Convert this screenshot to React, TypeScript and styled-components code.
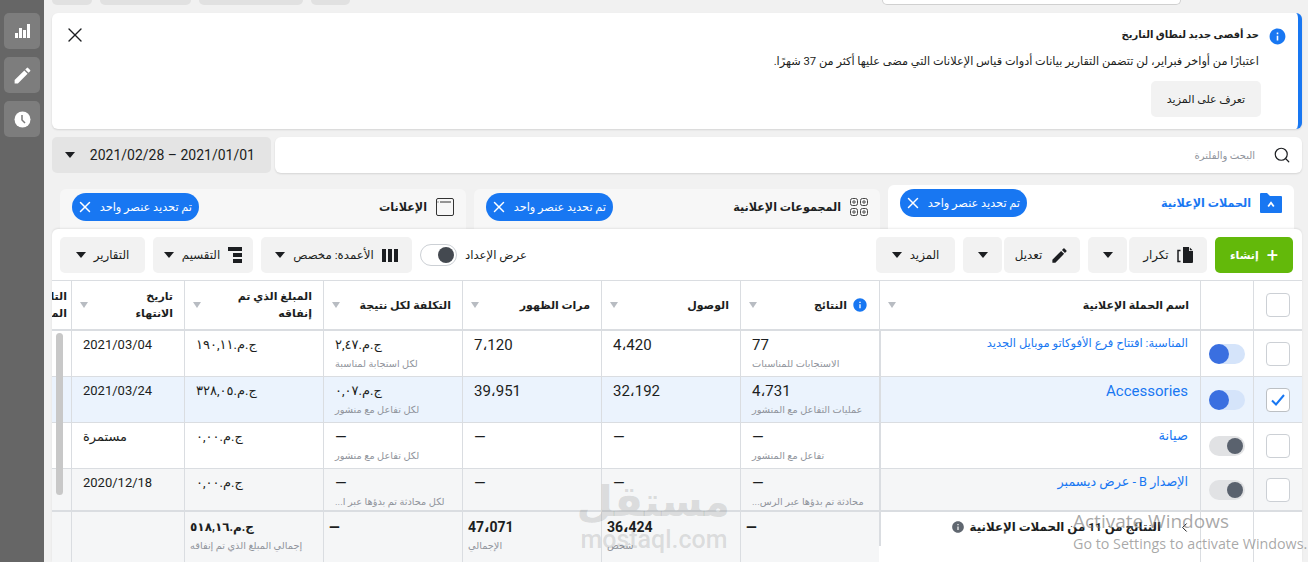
import { ReactNode } from 'react';
import styled, { createGlobalStyle } from 'styled-components';
import { X, Search, ChevronLeft } from 'lucide-react';
import { MdEdit, MdInfo } from 'react-icons/md';

const columns = '49px 53px 321px 139px 139px 139px 139px 139px 113px 19px';

const rows = [
  {
    bg: '#ffffff',
    on: true,
    checked: false,
    name: 'المناسبة: افتتاح فرع الأفوكاتو موبايل الجديد',
    nameSize: 11.5,
    results: '77',
    resultsSub: 'الاستجابات للمناسبات',
    reach: '4،420',
    impressions: '7،120',
    cost: 'ج.م.‏٢,٤٧',
    costSub: 'لكل استجابة لمناسبة',
    spend: 'ج.م.‏١٩٠,١١',
    end: '2021/03/04',
  },
  {
    bg: '#ebf3fd',
    on: true,
    checked: true,
    name: 'Accessories',
    nameSize: 15,
    results: '4،731',
    resultsSub: 'عمليات التفاعل مع المنشور',
    reach: '32،192',
    impressions: '39،951',
    cost: 'ج.م.‏٠,٠٧',
    costSub: 'لكل تفاعل مع منشور',
    spend: 'ج.م.‏٣٢٨,٠٥',
    end: '2021/03/24',
  },
  {
    bg: '#ffffff',
    on: false,
    checked: false,
    name: 'صيانة',
    nameSize: 13,
    results: '—',
    resultsSub: 'تفاعل مع المنشور',
    reach: '—',
    impressions: '—',
    cost: '—',
    costSub: 'لكل تفاعل مع منشور',
    spend: 'ج.م.‏٠,٠٠',
    end: 'مستمرة',
  },
  {
    bg: '#f5f6f7',
    on: false,
    checked: false,
    name: 'الإصدار B - عرض ديسمبر',
    nameSize: 12.7,
    results: '—',
    resultsSub: 'محادثة تم بدؤها عبر الرس...',
    reach: '—',
    impressions: '—',
    cost: '—',
    costSub: 'لكل محادثة تم بدؤها عبر ا...',
    spend: 'ج.م.‏٠,٠٠',
    end: '2020/12/18',
  },
];

function CampaignIcon() {
  return (
    <svg width="22" height="20" viewBox="0 0 22 20">
      <path d="M0 1a1 1 0 0 1 1-1h6l3 3h11a1 1 0 0 1 1 1v15a1 1 0 0 1-1 1H1a1 1 0 0 1-1-1z" fill="#1877f2" />
      <path d="M8.2 13.5L11 9.8l2.8 3.7" fill="none" stroke="#fff" strokeWidth="1.8" />
    </svg>
  );
}

function AdSetIcon() {
  return (
    <svg width="18" height="18" viewBox="0 0 18 18" fill="none" stroke="#444" strokeWidth="1">
      <rect x="0.5" y="0.5" width="7" height="7" rx="2" />
      <rect x="10.5" y="0.5" width="7" height="7" rx="2" />
      <rect x="0.5" y="10.5" width="7" height="7" rx="2" />
      <rect x="10.5" y="10.5" width="7" height="7" rx="2" />
      <circle cx="4" cy="4" r="1.2" />
      <circle cx="14" cy="4" r="1.2" />
      <circle cx="4" cy="14" r="1.2" />
      <circle cx="14" cy="14" r="1.2" />
    </svg>
  );
}

function AdIcon() {
  return (
    <svg width="18" height="18" viewBox="0 0 18 18" fill="none" stroke="#333" strokeWidth="1">
      <rect x="0.5" y="0.5" width="17" height="17" rx="1.5" />
      <path d="M4 4h11M1.5 4h1" />
    </svg>
  );
}

function BarsIcon() {
  return (
    <svg width="15" height="14" viewBox="0 0 15 14" fill="#fff">
      <rect x="0" y="9" width="3" height="5" />
      <rect x="4" y="4" width="3" height="10" />
      <rect x="8" y="6" width="3" height="8" />
      <rect x="12" y="0" width="3" height="14" />
    </svg>
  );
}

function ClockIcon() {
  return (
    <svg width="17" height="17" viewBox="0 0 17 17">
      <circle cx="8.5" cy="8.5" r="8" fill="#fff" />
      <path d="M8 4v5l3 3" fill="none" stroke="#7b7b7b" strokeWidth="1.5" />
    </svg>
  );
}

function DuplicateIcon() {
  return (
    <svg width="16" height="16" viewBox="0 0 16 16">
      <path d="M6 0h6v4h4v11a1 1 0 0 1-1 1H6z" fill="#1c1e21" />
      <path d="M12.8 0.5L15.6 3.2h-2.8z" fill="#1c1e21" />
      <path d="M3.5 3.5H1v11h2.5" fill="none" stroke="#1c1e21" strokeWidth="1.5" />
    </svg>
  );
}

function BreakdownIcon() {
  return (
    <svg width="14" height="16" viewBox="0 0 14 16" fill="#1c1e21">
      <rect x="0" y="0" width="14" height="4" />
      <rect x="5" y="6" width="9" height="4" />
      <rect x="5" y="12" width="9" height="4" />
    </svg>
  );
}

function ColumnsIcon() {
  return (
    <svg width="16" height="13" viewBox="0 0 16 13" fill="#1c1e21">
      <rect x="0" y="0" width="4" height="13" />
      <rect x="6" y="0" width="4" height="13" />
      <rect x="12" y="0" width="4" height="13" />
    </svg>
  );
}

function Tab({ active, title, icon }: { active?: boolean; title: string; icon: ReactNode }) {
  return (
    <TabBox $active={active}>
      <TabTitle $active={active}>
        {icon}
        <span>{title}</span>
      </TabTitle>
      <Pill>
        <span>تم تحديد عنصر واحد</span>
        <X size={18} strokeWidth={2} />
      </Pill>
    </TabBox>
  );
}

function HeadCell({ children, info }: { children?: ReactNode; info?: boolean }) {
  return (
    <Head>
      {info && <MdInfo size={16} color="#1877f2" />}
      <HeadText>{children}</HeadText>
      <SortCaret />
    </Head>
  );
}

export default function App() {
  return (
    <Page>
      <GlobalStyle />
      <Sidebar>
        <SideButton>
          <BarsIcon />
        </SideButton>
        <SideButton>
          <MdEdit size={21} color="#fff" />
        </SideButton>
        <SideButton>
          <ClockIcon />
        </SideButton>
      </Sidebar>

      <Main>
        <TopStrip>
          <TopStub $w={40} />
          <TopStub $w={91} />
          <TopStub $w={104} />
          <TopStub $w={39} />
          <TopInput />
        </TopStrip>

        <Notice>
          <NoticeBody>
            <NoticeIcon>
              <MdInfo size={19} color="#1877f2" />
            </NoticeIcon>
            <NoticeText>
              <NoticeTitle>حد أقصى جديد لنطاق التاريخ</NoticeTitle>
              <NoticeLine>
                اعتبارًا من أواخر فبراير، لن تتضمن التقارير بيانات أدوات قياس الإعلانات التي مضى عليها أكثر من 37 شهرًا.
              </NoticeLine>
              <NoticeButton $w={110}>تعرف على المزيد</NoticeButton>
            </NoticeText>
          </NoticeBody>
          <CloseBox>
            <X size={24} strokeWidth={1.4} color="#1c1e21" />
          </CloseBox>
        </Notice>

        <FilterRow>
          <SearchBox>
            <Search size={18} strokeWidth={1.6} color="#1c1e21" />
            <SearchHint>البحث والفلترة</SearchHint>
          </SearchBox>
          <DateButton>
            <DateText>2021/02/28 – 2021/01/01</DateText>
            <Caret />
          </DateButton>
        </FilterRow>

        <Tabs>
          <Tab active title="الحملات الإعلانية" icon={<CampaignIcon />} />
          <Tab title="المجموعات الإعلانية" icon={<AdSetIcon />} />
          <Tab title="الإعلانات" icon={<AdIcon />} />
        </Tabs>

        <Panel>
          <Toolbar>
            <ToolGroup>
              <CreateButton>
                <PlusMark>+</PlusMark>
                إنشاء
              </CreateButton>
              <Split>
                <GrayButton $w={78}>
                  <DuplicateIcon />
                  تكرار
                </GrayButton>
                <GrayButton $w={39}>
                  <Caret />
                </GrayButton>
              </Split>
              <Split>
                <GrayButton $w={76}>
                  <MdEdit size={19} color="#1c1e21" />
                  تعديل
                </GrayButton>
                <GrayButton $w={39}>
                  <Caret />
                </GrayButton>
              </Split>
              <GrayButton $w={79}>
                المزيد
                <Caret />
              </GrayButton>
            </ToolGroup>
            <ToolGroup>
              <SetupLabel>عرض الإعداد</SetupLabel>
              <SetupSwitch>
                <SetupKnob />
              </SetupSwitch>
              <GrayButton $w={151}>
                <ColumnsIcon />
                الأعمدة: مخصص
                <Caret />
              </GrayButton>
              <GrayButton $w={100}>
                <BreakdownIcon />
                التقسيم
                <Caret />
              </GrayButton>
              <GrayButton $w={85}>
                التقارير
                <Caret />
              </GrayButton>
            </ToolGroup>
          </Toolbar>

          <TableWrap>
            <HeaderRow>
              <Head>
                <Checkbox />
              </Head>
              <Head />
              <HeadCell>اسم الحملة الإعلانية</HeadCell>
              <HeadCell info>النتائج</HeadCell>
              <HeadCell>الوصول</HeadCell>
              <HeadCell>مرات الظهور</HeadCell>
              <HeadCell>التكلفة لكل نتيجة</HeadCell>
              <HeadCell>المبلغ الذي تم إنفاقه</HeadCell>
              <HeadCell>
                تاريخ
                <br />
                الانتهاء
              </HeadCell>
              <Head>
                <CutHead>التاريخ المحدد</CutHead>
              </Head>
            </HeaderRow>

            {rows.map((row, i) => (
              <Row key={row.name} $bg={row.bg} $last={i === rows.length - 1}>
                <Cell>
                  <Checkbox $checked={row.checked}>
                    {row.checked && (
                      <svg width="14" height="12" viewBox="0 0 14 12" fill="none" stroke="#1877f2" strokeWidth="2">
                        <path d="M1 6.5l4 4 8-9.5" />
                      </svg>
                    )}
                  </Checkbox>
                </Cell>
                <Cell>
                  <Toggle $on={row.on}>
                    <Knob $on={row.on} />
                  </Toggle>
                </Cell>
                <NameCell $size={row.nameSize}>{row.name}</NameCell>
                <ValueCell>
                  <Value>{row.results}</Value>
                  <Sub>{row.resultsSub}</Sub>
                </ValueCell>
                <ValueCell>
                  <Value>{row.reach}</Value>
                </ValueCell>
                <ValueCell>
                  <Value>{row.impressions}</Value>
                </ValueCell>
                <ValueCell>
                  {row.cost === '—' ? <Value>{row.cost}</Value> : <Money>{row.cost}</Money>}
                  <Sub>{row.costSub}</Sub>
                </ValueCell>
                <ValueCell>
                  <Money>{row.spend}</Money>
                </ValueCell>
                <ValueCell>
                  <Money>{row.end}</Money>
                </ValueCell>
                <Cell />
              </Row>
            ))}

            <FooterRow>
              <FootCell $white />
              <FootCell $white />
              <FootName>
                <ChevronLeft size={15} strokeWidth={1.6} color="#1c1e21" />
                <FootNameText>النتائج من 11 من الحملات الإعلانية</FootNameText>
                <MdInfo size={14} color="#606770" />
              </FootName>
              <FootCell>
                <FootValue>—</FootValue>
              </FootCell>
              <FootCell>
                <FootValue>36،424</FootValue>
                <Sub>شخص</Sub>
              </FootCell>
              <FootCell>
                <FootValue>47،071</FootValue>
                <Sub>الإجمالي</Sub>
              </FootCell>
              <FootCell>
                <FootValue>—</FootValue>
              </FootCell>
              <FootCell>
                <FootMoney>ج.م.‏٥١٨,١٦</FootMoney>
                <Sub>إجمالي المبلغ الذي تم إنفاقه</Sub>
              </FootCell>
              <FootCell />
              <FootCell />
            </FooterRow>

            <ScrollThumb />
          </TableWrap>
        </Panel>
      </Main>

      <Watermark>
        <WatermarkLogo>مستقل</WatermarkLogo>
        <WatermarkUrl>mostaql.com</WatermarkUrl>
      </Watermark>
      <Activation>
        <ActivationTitle>Activate Windows</ActivationTitle>
        <ActivationHint>Go to Settings to activate Windows.</ActivationHint>
      </Activation>
    </Page>
  );
}

const GlobalStyle = createGlobalStyle`
  html, body {
    margin: 0;
    padding: 0;
    height: 100%;
    background: #f1f1f1;
  }
  body {
    font-family: Roboto, "DejaVu Sans", sans-serif;
    color: #1c1e21;
  }
  * {
    box-sizing: border-box;
  }
`;

const Page = styled.div`
  position: relative;
  display: flex;
  width: 1308px;
  height: 562px;
  overflow: hidden;
`;

const Sidebar = styled.aside`
  flex: 0 0 44px;
  display: flex;
  flex-direction: column;
  gap: 8px;
  padding: 13px 4px 0;
  background: #666666;
`;

const SideButton = styled.div`
  display: flex;
  align-items: center;
  justify-content: center;
  height: 36px;
  border-radius: 5px;
  background: #7d7d7d;
`;

const Main = styled.main`
  width: 1250px;
  margin-left: 8px;
  display: flex;
  flex-direction: column;
`;

const TopStrip = styled.div`
  display: flex;
  gap: 8px;
  height: 13px;
`;

const TopStub = styled.div<{ $w: number }>`
  width: ${(p) => p.$w}px;
  height: 5px;
  border-radius: 0 0 5px 5px;
  background: #e1e1e1;
`;

const TopInput = styled.div`
  width: 299px;
  height: 5px;
  margin-left: 524px;
  border: 1px solid #d0d0d0;
  border-top: 0;
  border-radius: 0 0 5px 5px;
  background: #fff;
`;

const Notice = styled.section`
  direction: rtl;
  display: flex;
  justify-content: space-between;
  height: 116px;
  padding: 14px 0 0 11px;
  border-right: 4px solid #1877f2;
  border-radius: 6px;
  background: #fff;
  box-shadow: 0 1px 2px rgba(0, 0, 0, 0.12);
`;

const NoticeBody = styled.div`
  display: flex;
  gap: 9px;
  padding-right: 11px;
`;

const NoticeIcon = styled.div`
  width: 19px;
  line-height: 0;
`;

const NoticeText = styled.div`
  display: flex;
  flex-direction: column;
  align-items: flex-start;
`;

const NoticeTitle = styled.div`
  height: 20px;
  line-height: 16px;
  font-size: 10px;
  font-weight: 700;
`;

const NoticeLine = styled.div`
  margin-top: 6px;
  height: 28px;
  line-height: 18px;
  font-size: 11.3px;
`;

const CloseBox = styled.div`
  margin-top: -4px;
  line-height: 0;
`;

const FilterRow = styled.div`
  direction: rtl;
  display: flex;
  gap: 4px;
  margin-top: 8px;
  height: 36px;
`;

const SearchBox = styled.div`
  flex: 1;
  display: flex;
  align-items: center;
  gap: 18px;
  padding-right: 11px;
  border-radius: 6px;
  background: #fff;
  box-shadow: 0 1px 2px rgba(0, 0, 0, 0.12);
`;

const SearchHint = styled.span`
  font-size: 10px;
  color: #90949c;
`;

const Caret = styled.i`
  flex: none;
  width: 0;
  height: 0;
  border-left: 5.5px solid transparent;
  border-right: 5.5px solid transparent;
  border-top: 6px solid #1c1e21;
`;

const DateButton = styled.div`
  flex: 0 0 219px;
  direction: rtl;
  display: flex;
  align-items: center;
  justify-content: space-between;
  padding: 0 16px 0 13px;
  border-radius: 5px;
  background: #e4e4e4;
  font-size: 14px;
`;

const DateText = styled.span`
  direction: ltr;
`;

const Tabs = styled.div`
  direction: rtl;
  display: flex;
  align-items: flex-end;
  gap: 8px;
  height: 56px;
  padding: 0 8px;
`;

const TabBox = styled.div<{ $active?: boolean }>`
  flex: 1;
  display: flex;
  align-items: center;
  justify-content: space-between;
  height: ${(p) => (p.$active ? 44 : 40)}px;
  padding: ${(p) => (p.$active ? '0 12px 8px 12px' : '0 12px 4px 12px')};
  border-radius: 6px 6px 0 0;
  background: ${(p) => (p.$active ? '#fff' : '#f7f7f7')};
`;

const TabTitle = styled.div<{ $active?: boolean }>`
  display: flex;
  align-items: center;
  gap: 9px;
  font-size: 11.2px;
  font-weight: 700;
  color: ${(p) => (p.$active ? '#1877f2' : '#1c1e21')};
`;

const Pill = styled.div`
  display: flex;
  align-items: center;
  justify-content: space-between;
  width: 127px;
  height: 28px;
  padding: 0 7px 0 4px;
  border-radius: 14px;
  background: #1877f2;
  color: #fff;
  font-size: 11.3px;
  white-space: nowrap;
`;

const Panel = styled.div`
  flex: 1;
  min-height: 0;
  background: #fff;
  border-radius: 6px 6px 0 0;
  box-shadow: 0 -1px 2px rgba(0, 0, 0, 0.08);
`;

const Toolbar = styled.div`
  direction: rtl;
  display: flex;
  justify-content: space-between;
  height: 52px;
  padding: 8px 9px 0 8px;
  border-bottom: 1px solid #dadde1;
`;

const ToolGroup = styled.div`
  display: flex;
  align-items: center;
  gap: 8px;
  height: 36px;
`;

const Button = styled.div`
  display: flex;
  align-items: center;
  justify-content: center;
  gap: 8px;
  height: 36px;
  border-radius: 5px;
  font-size: 11.8px;
`;

const GrayButton = styled(Button)<{ $w: number }>`
  width: ${(p) => p.$w}px;
  background: #f2f2f2;
`;

const NoticeButton = styled(GrayButton)`
  margin-right: -2px;
  font-size: 11px;
`;

const CreateButton = styled(Button)`
  width: 78px;
  background: #63b90a;
  color: #fff;
  font-weight: 700;
  font-size: 11px;
`;

const PlusMark = styled.span`
  font-size: 20px;
  font-weight: 400;
  line-height: 1;
`;

const Split = styled.div`
  display: flex;
  gap: 2px;
`;

const SetupLabel = styled.span`
  font-size: 11.7px;
`;

const SetupSwitch = styled.div`
  display: flex;
  align-items: center;
  width: 37px;
  height: 22px;
  padding: 0 2px;
  border: 1px solid #ccd0d5;
  border-radius: 11px;
  background: #fff;
`;

const SetupKnob = styled.div`
  width: 16px;
  height: 16px;
  border-radius: 50%;
  background: #444950;
`;

const TableWrap = styled.div`
  position: relative;
  direction: rtl;
`;

const HeaderRow = styled.div`
  display: grid;
  grid-template-columns: ${columns};
  height: 50px;
  border-bottom: 2px solid #dadde1;
  background: #fff;
`;

const Head = styled.div`
  display: flex;
  align-items: center;
  justify-content: flex-start;
  gap: 5px;
  padding: 0 11px 0 8px;
  overflow: hidden;
  border-left: 1px solid #dadde1;
  &:first-child {
    justify-content: center;
    padding: 0;
  }
  &:last-child {
    border-left: 0;
    padding: 0 4px 0 0;
  }
`;

const HeadText = styled.div`
  flex: 1;
  font-size: 11px;
  font-weight: 700;
  line-height: 17px;
`;

const CutHead = styled(HeadText)`
  width: 30px;
  flex: none;
`;

const SortCaret = styled.i`
  flex: none;
  width: 0;
  height: 0;
  border-left: 4.5px solid transparent;
  border-right: 4.5px solid transparent;
  border-top: 6px solid #b8bcc2;
`;

const Row = styled.div<{ $bg: string; $last: boolean }>`
  display: grid;
  grid-template-columns: ${columns};
  height: ${(p) => (p.$last ? 41 : 46)}px;
  overflow: hidden;
  border-bottom: ${(p) => (p.$last ? '0' : '1px solid #dadde1')};
  background: ${(p) => p.$bg};
`;

const Cell = styled.div`
  display: flex;
  align-items: center;
  justify-content: center;
  border-left: 1px solid #dadde1;
  &:last-child {
    border-left: 0;
  }
`;

const NameCell = styled.div<{ $size: number }>`
  padding: ${(p) => (p.$size === 15 ? 6 : 4)}px 12px 0 0;
  border-left: 2px solid #dadde1;
  color: #1877f2;
  font-size: ${(p) => p.$size}px;
  line-height: 17px;
`;

const ValueCell = styled.div`
  padding: 4px 4px 0 11px;
  overflow: hidden;
  border-left: 1px solid #dadde1;
  direction: ltr;
  text-align: left;
`;

const Value = styled.div`
  direction: rtl;
  width: fit-content;
  height: 20px;
  line-height: 20px;
  font-size: 15px;
`;

const Money = styled.div`
  direction: rtl;
  width: fit-content;
  height: 20px;
  margin-top: 1px;
  margin-bottom: -1px;
  line-height: 17px;
  font-size: 13px;
`;

const Sub = styled.div`
  direction: rtl;
  width: fit-content;
  margin-top: 1px;
  line-height: 16px;
  font-size: 9.8px;
  white-space: nowrap;
  color: #90949c;
`;

const Checkbox = styled.div<{ $checked?: boolean }>`
  display: flex;
  align-items: center;
  justify-content: center;
  width: 24px;
  height: 24px;
  border: 1px solid ${(p) => (p.$checked ? '#bcc0c4' : '#ccd0d5')};
  border-radius: 4px;
  background: #fff;
`;

const Toggle = styled.div<{ $on: boolean }>`
  display: flex;
  width: 36px;
  height: 20px;
  border-radius: 10px;
  background: ${(p) => (p.$on ? '#d5e4fa' : '#e1e2e4')};
`;

const Knob = styled.div<{ $on: boolean }>`
  width: ${(p) => (p.$on ? 20 : 16)}px;
  height: ${(p) => (p.$on ? 20 : 16)}px;
  margin: ${(p) => (p.$on ? '0 auto 0 0' : '2px 2px 2px 0')};
  border-radius: 50%;
  background: ${(p) => (p.$on ? '#3a6fe0' : '#5a626e')};
`;

const FooterRow = styled.div`
  display: grid;
  grid-template-columns: ${columns};
  height: 52px;
  border-top: 2px solid #dadde1;
  background: #f5f6f7;
`;

const FootCell = styled.div<{ $white?: boolean }>`
  padding: 5px 4px 0 5px;
  direction: ltr;
  border-left: 1px solid #dadde1;
  background: ${(p) => (p.$white ? '#fff' : 'transparent')};
  &:last-child {
    border-left: 0;
  }
`;

const FootName = styled.div`
  position: relative;
  display: flex;
  align-items: flex-start;
  gap: 5px;
  padding: 8px 8px 0 0;
  background: #fff;
  &::after {
    content: '';
    position: absolute;
    left: 0;
    top: 0;
    width: 2px;
    height: 34px;
    background: #dadde1;
  }
`;

const FootNameText = styled.span`
  margin-right: 11px;
  font-size: 11.8px;
  font-weight: 700;
  line-height: 15px;
`;

const FootValue = styled.div`
  direction: rtl;
  width: fit-content;
  height: 20px;
  line-height: 20px;
  font-size: 14px;
  font-weight: 700;
`;

const FootMoney = styled(FootValue)`
  font-size: 12px;
`;

const ScrollThumb = styled.div`
  position: absolute;
  left: 4px;
  top: 52px;
  width: 7px;
  height: 162px;
  border-radius: 4px;
  background: #c8c8c8;
`;

const Watermark = styled.div`
  position: absolute;
  left: 578px;
  top: 476px;
  width: 152px;
  text-align: center;
  color: rgba(110, 110, 110, 0.2);
  pointer-events: none;
`;

const WatermarkLogo = styled.div`
  direction: rtl;
  font-size: 42px;
  font-weight: 700;
  line-height: 52px;
`;

const WatermarkUrl = styled.div`
  font-size: 25px;
  font-weight: 500;
  line-height: 24px;
`;

const Activation = styled.div`
  position: absolute;
  left: 1073px;
  top: 509px;
  width: 240px;
  white-space: nowrap;
  color: rgba(110, 110, 110, 0.6);
  pointer-events: none;
`;

const ActivationTitle = styled.div`
  font-family: "Open Sans", sans-serif;
  font-size: 19px;
  line-height: 25px;
`;

const ActivationHint = styled.div`
  font-family: "Open Sans", sans-serif;
  font-size: 14.3px;
  line-height: 20px;
`;
